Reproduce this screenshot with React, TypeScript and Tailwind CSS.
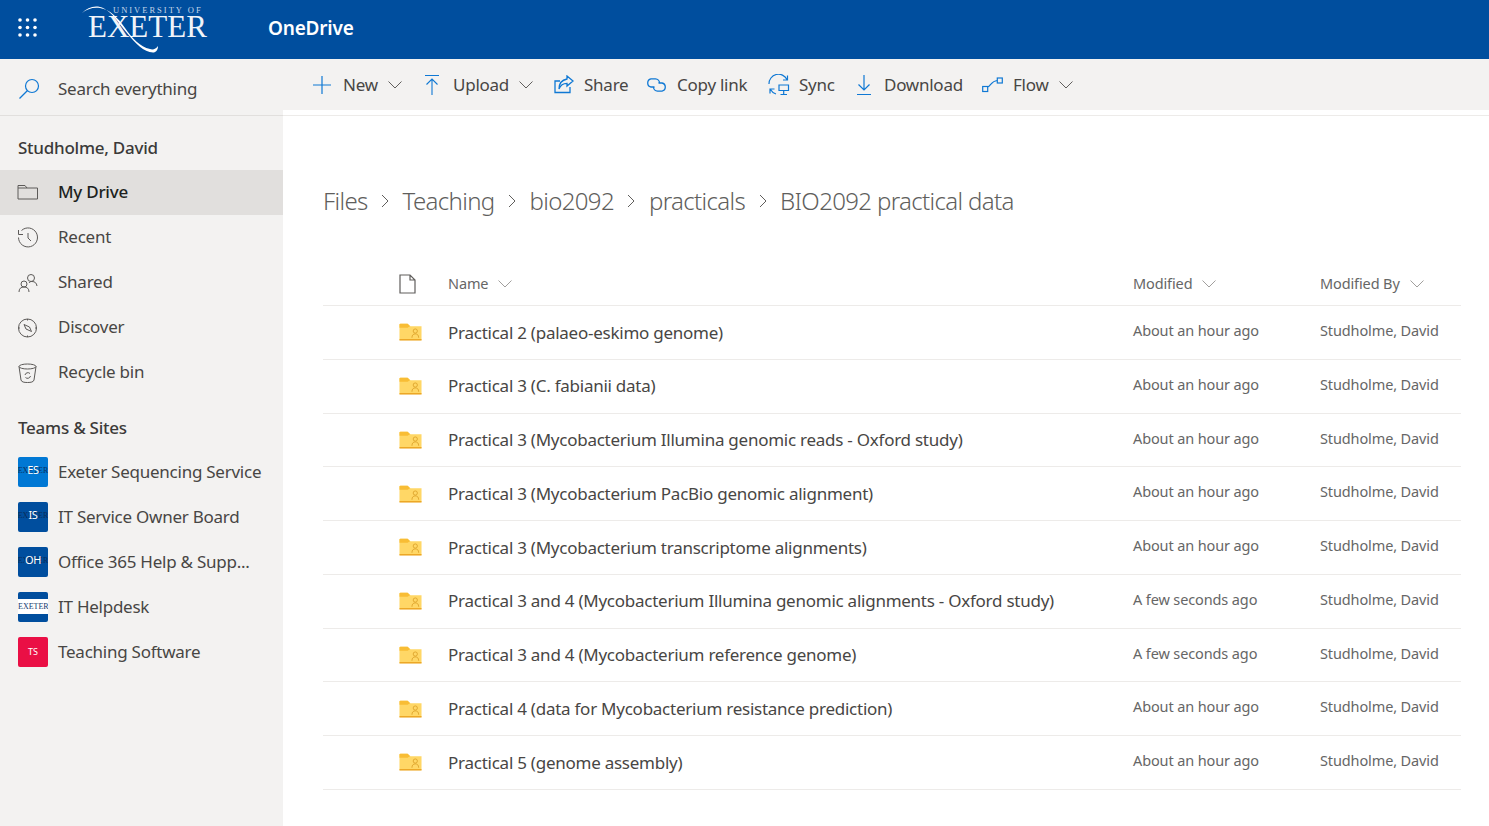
import { ReactNode } from "react";

const font = { fontFamily: '"Noto Sans", sans-serif' };
const serif = { fontFamily: '"Liberation Serif", serif' };

function Chevron({ className = "" }: { className?: string }) {
  return (
    <svg viewBox="0 0 14 8" className={`w-[14px] h-[8px] ${className}`} fill="none" stroke="currentColor" strokeWidth="1">
      <path d="M0.5 0.5 L7 7 L13.5 0.5" />
    </svg>
  );
}

function Waffle() {
  const dots = [3, 10.5, 18];
  return (
    <svg viewBox="0 0 21 21" className="w-[21px] h-[21px]" fill="white">
      {dots.map((y) => dots.map((x) => <circle key={`${x}-${y}`} cx={x} cy={y} r="1.8" />))}
    </svg>
  );
}

function ExeterLogo() {
  return (
    <div className="relative w-[130px] h-[59px] text-white" style={serif}>
      <div className="absolute left-[33px] top-[5px] text-[8.5px] leading-[10px] tracking-[2px] text-[#c4d5e8] whitespace-nowrap">
        UNIVERSITY OF
      </div>
      <div className="absolute left-[8px] top-[12px] text-[31px] leading-[30px] text-[#f0f4f9] whitespace-nowrap">
        EXETER
      </div>
      <svg viewBox="0 0 130 59" className="absolute inset-0 w-[130px] h-[59px]" fill="white">
        <path d="M2 13 C8 7 16 4.500 24 8.500 C33 13 39 24 47 33 C55 43 64 52.500 73 52.500 C76 52.500 78 50 78 46 C76 49 73 50 70 49 C60 47 52 38 45 28 C38 18 30 9.500 20 8 C13 7 7 9 2 13 Z" />
      </svg>
    </div>
  );
}

const ic = "text-[#0f78d4]";

const toolbarIcons: Record<string, ReactNode> = {
  plus: (
    <svg viewBox="0 0 20 20" className={`w-[20px] h-[20px] ${ic}`} fill="none" stroke="currentColor" strokeWidth="1.200">
      <path d="M10 1 V19 M1 10 H19" />
    </svg>
  ),
  upload: (
    <svg viewBox="0 0 16 22" className={`w-[16px] h-[22px] ${ic}`} fill="none" stroke="currentColor" strokeWidth="1.100">
      <path d="M1 1.500 H15 M8 21 V5 M2.500 10.500 L8 5 L13.500 10.500" />
    </svg>
  ),
  share: (
    <svg viewBox="0 0 20 19" className={`w-[20px] h-[19px] ml-[1px] ${ic}`} fill="none" stroke="currentColor" strokeWidth="1.300">
      <path d="M16 12 V17.500 H1 V6 H6" />
      <path d="M13 1 L19 6 L13 11 V8.300 C9 8.300 6.500 10 5 14 C5 8.500 8 5 13 4 Z" />
    </svg>
  ),
  link: (
    <svg viewBox="0 0 21 14" className={`w-[21px] h-[14px] ${ic}`} fill="none" stroke="currentColor" strokeWidth="1.300">
      <path d="M8.500 9 H5 A4.200 4.200 0 0 1 5 0.800 H9.500 A4.200 4.200 0 0 1 13.500 5" />
      <path d="M12.500 5 H16 A4.200 4.200 0 0 1 16 13.200 H11.500 A4.200 4.200 0 0 1 7.500 9" />
    </svg>
  ),
  sync: (
    <svg viewBox="0 0 22 22" className={`w-[22px] h-[22px] ml-[1px] ${ic}`} fill="none" stroke="currentColor" strokeWidth="1.200">
      <path d="M1 10 A9.500 9.500 0 0 1 19 5.500 M19.500 1.500 V6 H15" />
      <path d="M2 19.500 V15 H6.500 M2.500 15.500 A9.500 9.500 0 0 0 8 20" />
      <path d="M11 11 H20.500 V16.500 H11 Z M15.700 16.500 V20 M12.500 20.500 H19" />
    </svg>
  ),
  download: (
    <svg viewBox="0 0 16 22" className={`w-[16px] h-[22px] ${ic}`} fill="none" stroke="currentColor" strokeWidth="1.200">
      <path d="M1 20.500 H15 M8 1 V16 M2.500 10.500 L8 16 L13.500 10.500" />
    </svg>
  ),
  flow: (
    <svg viewBox="0 0 21 16" className={`w-[21px] h-[16px] ml-[1px] ${ic}`} fill="none" stroke="currentColor" strokeWidth="1.200">
      <rect x="0.700" y="9.500" width="5" height="5" />
      <rect x="15.300" y="1" width="5" height="5" />
      <path d="M5.500 10 C9 9 9 4 15.300 3.500" />
    </svg>
  ),
};

const toolbarItems = [
  { icon: "plus", label: "New", chevron: true, box: "w-[112px]", iconBox: "w-[31px]" },
  { icon: "upload", label: "Upload", chevron: true, box: "w-[129px]", iconBox: "w-[29px]" },
  { icon: "share", label: "Share", chevron: false, box: "w-[93px]", iconBox: "w-[31px]" },
  { icon: "link", label: "Copy link", chevron: false, box: "w-[121px]", iconBox: "w-[31px]" },
  { icon: "sync", label: "Sync", chevron: false, box: "w-[89px]", iconBox: "w-[32px]" },
  { icon: "download", label: "Download", chevron: false, box: "w-[125px]", iconBox: "w-[28px]" },
  { icon: "flow", label: "Flow", chevron: true, box: "w-[100px]", iconBox: "w-[32px]" },
];

function NavIcon({ name }: { name: string }) {
  const common = "w-[22px] h-[22px] text-[#5c5a58]";
  if (name === "folder")
    return (
      <svg viewBox="0 0 22 22" className={common} fill="none" stroke="currentColor" strokeWidth="1">
        <path d="M1 3.500 H8 L10 6 H20.500 V17 H1 Z M1 6 H10" />
      </svg>
    );
  if (name === "recent")
    return (
      <svg viewBox="0 0 22 22" className={common} fill="none" stroke="currentColor" strokeWidth="1">
        <path d="M4.500 3.500 A9.500 9.500 0 1 1 1.500 10.500 M1.500 3 V7.500 H6 M11 6 V11 L14 14" />
      </svg>
    );
  if (name === "shared")
    return (
      <svg viewBox="0 0 22 22" className={common} fill="none" stroke="currentColor" strokeWidth="1">
        <circle cx="14" cy="6" r="3.500" />
        <circle cx="7" cy="12" r="3" />
        <path d="M2 20 C2 16.500 4 15 7 15 C10 15 12 16.500 12 20 M12 11 C13 9.500 14 9.500 15 9.500 C18 9.500 19.500 11 20 14" />
      </svg>
    );
  if (name === "discover")
    return (
      <svg viewBox="0 0 22 22" className={common} fill="none" stroke="currentColor" strokeWidth="1">
        <circle cx="10.500" cy="11" r="9" />
        <path d="M7 7.500 L12.500 10 L14.500 14.500 L9 12 Z M10.500 2 V3.500 M10.500 18.500 V20 M1.500 11 H3 M18 11 H19.500" />
      </svg>
    );
  return (
    <svg viewBox="0 0 22 22" className={common} fill="none" stroke="currentColor" strokeWidth="1">
      <ellipse cx="10.500" cy="4.500" rx="8.500" ry="2.500" />
      <path d="M2 4.500 L4 18 C4.500 20 7 20.500 10.500 20.500 C14 20.500 16.500 20 17 18 L19 4.500" />
      <path d="M8 13 A3 3 0 0 1 13 11.500 M13.500 14 A3 3 0 0 1 8.500 15.500" />
    </svg>
  );
}

const navItems = [
  { icon: "folder", label: "My Drive", active: true },
  { icon: "recent", label: "Recent", active: false },
  { icon: "shared", label: "Shared", active: false },
  { icon: "discover", label: "Discover", active: false },
  { icon: "recycle", label: "Recycle bin", active: false },
];

function SiteTile({ initials, bg }: { initials: string; bg: string }) {
  return (
    <div className={`relative w-[30px] h-[30px] rounded-[2px] overflow-hidden shrink-0 flex items-center justify-center pb-[2px] ${bg}`}>
      <span className="absolute left-[-3px] right-[-3px] top-[9px] text-center text-[8px] leading-[9px] text-[#0c2a52] opacity-90 whitespace-nowrap" style={serif}>
        EXETER
      </span>
      <span className="relative text-[11px] tracking-[-0.3px] text-white">{initials}</span>
    </div>
  );
}

function HelpdeskTile() {
  return (
    <div className="relative w-[30px] h-[30px] rounded-[2px] overflow-hidden shrink-0 bg-[#004e9e] flex items-center">
      <div className="w-full h-[15px] bg-white text-center text-[8px] leading-[15px] text-[#123a6e] whitespace-nowrap" style={serif}>
        EXETER
      </div>
    </div>
  );
}

const sites = [
  { label: "Exeter Sequencing Service", tile: <SiteTile initials="ES" bg="bg-[#0078d4]" /> },
  { label: "IT Service Owner Board", tile: <SiteTile initials="IS" bg="bg-[#004e9e]" /> },
  { label: "Office 365 Help & Supp...", tile: <SiteTile initials="OH" bg="bg-[#004e9e]" /> },
  { label: "IT Helpdesk", tile: <HelpdeskTile /> },
  {
    label: "Teaching Software",
    tile: (
      <div className="w-[30px] h-[30px] rounded-[2px] shrink-0 bg-[#ea0f45] flex items-center justify-center text-[9px] text-white">TS</div>
    ),
  },
];

function SharedFolder() {
  return (
    <svg viewBox="0 0 24 18" className="w-[23px] h-[18px]">
      <path d="M0.500 1.500 Q0.500 0.500 1.500 0.500 H9 L12 3 H23.500 V17.500 H0.500 Z" fill="#ffd766" />
      <path d="M0.500 1.500 Q0.500 0.500 1.500 0.500 H9 L11.500 3 L9 4.500 H0.500 Z" fill="#f8bd35" />
      <rect x="0.500" y="16.500" width="23" height="1.300" fill="#e89c18" />
      <circle cx="17" cy="8" r="2.200" fill="none" stroke="#dca22a" strokeWidth="0.900" />
      <path d="M13.500 15 C13.500 12 15 11 17 11 C19 11 20.500 12 20.500 15" fill="none" stroke="#dca22a" strokeWidth="0.900" />
    </svg>
  );
}

const rows = [
  { name: "Practical 2 (palaeo-eskimo genome)", modified: "About an hour ago" },
  { name: "Practical 3 (C. fabianii data)", modified: "About an hour ago" },
  { name: "Practical 3 (Mycobacterium Illumina genomic reads - Oxford study)", modified: "About an hour ago" },
  { name: "Practical 3 (Mycobacterium PacBio genomic alignment)", modified: "About an hour ago" },
  { name: "Practical 3 (Mycobacterium transcriptome alignments)", modified: "About an hour ago" },
  { name: "Practical 3 and 4 (Mycobacterium Illumina genomic alignments - Oxford study)", modified: "A few seconds ago" },
  { name: "Practical 3 and 4 (Mycobacterium reference genome)", modified: "A few seconds ago" },
  { name: "Practical 4 (data for Mycobacterium resistance prediction)", modified: "About an hour ago" },
  { name: "Practical 5 (genome assembly)", modified: "About an hour ago" },
];

const crumbs = ["Files", "Teaching", "bio2092", "practicals", "BIO2092 practical data"];

export default function App() {
  return (
    <div className="w-[1489px] h-[826px] overflow-hidden flex flex-col bg-white" style={font}>
      <header className="h-[59px] shrink-0 bg-[#004e9e] flex items-center">
        <div className="w-[55px] flex justify-center mb-[4px]">
          <Waffle />
        </div>
        <div className="ml-[25px]">
          <ExeterLogo />
        </div>
        <div className="ml-[58px] mb-[2px] text-[19px] font-semibold text-white tracking-[-0.2px]">OneDrive</div>
      </header>

      <div className="flex flex-1 min-h-0">
        <aside className="w-[283px] shrink-0 bg-[#f3f2f1] flex flex-col">
          <div className="h-[57px] shrink-0 border-b border-[#e1dfdd] flex items-center pl-[18px] pt-[3px]">
            <svg viewBox="0 0 22 22" className="w-[22px] h-[22px] text-[#0f78d4]" fill="none" stroke="currentColor" strokeWidth="1.200">
              <circle cx="14" cy="8" r="6.500" />
              <path d="M9.500 12.500 L1.500 20.500" />
            </svg>
            <span className="ml-[18px] text-[17px] tracking-[-0.25px] text-[#484644]">Search everything</span>
          </div>

          <div className="h-[54px] shrink-0 flex items-end pb-[10px] pl-[18px] text-[17px] font-medium tracking-[-0.25px] text-[#3b3a39]">
            Studholme, David
          </div>

          {navItems.map((item) => (
            <div key={item.label} className={`h-[45px] shrink-0 flex items-center pl-[17px] ${item.active ? "bg-[#e1dfdd]" : ""}`}>
              <NavIcon name={item.icon} />
              <span className={`ml-[19px] mb-[1px] text-[17px] tracking-[-0.25px] ${item.active ? "font-medium text-[#201f1e]" : "text-[#484644]"}`}>
                {item.label}
              </span>
            </div>
          ))}

          <div className="h-[54px] shrink-0 flex items-end pb-[9px] pl-[18px] text-[17px] font-medium tracking-[-0.25px] text-[#3b3a39]">
            Teams &amp; Sites
          </div>

          {sites.map((site) => (
            <div key={site.label} className="h-[45px] shrink-0 flex items-center pl-[18px]">
              {site.tile}
              <span className="ml-[10px] text-[17px] tracking-[-0.25px] text-[#484644] whitespace-nowrap">{site.label}</span>
            </div>
          ))}
        </aside>

        <main className="flex-1 min-w-0 flex flex-col">
          <div className="h-[51px] shrink-0 bg-[#f3f2f1] flex items-center pl-[29px] text-[17px] tracking-[-0.25px] text-[#484644]">
            {toolbarItems.map((item) => (
              <div key={item.label} className={`flex items-center shrink-0 ${item.box}`}>
                <div className={`flex items-center shrink-0 ${item.iconBox}`}>{toolbarIcons[item.icon]}</div>
                <span className="whitespace-nowrap">{item.label}</span>
                {item.chevron && <Chevron className="ml-[10px] text-[#605e5c]" />}
              </div>
            ))}
          </div>

          <div className="mt-[5px] border-t border-[#edebe9]" />

          <nav className="mt-[67px] ml-[40px] h-[36px] flex items-center text-[24px] font-light tracking-[-0.65px] text-[#605e5c] whitespace-nowrap">
            {crumbs.map((crumb, i) => (
              <div key={crumb} className="flex items-center">
                {i > 0 && (
                  <svg viewBox="0 0 8 14" className="w-[8px] h-[14px] mx-[13.5px] text-[#605e5c]" fill="none" stroke="currentColor" strokeWidth="1">
                    <path d="M1 1 L7 7 L1 13" />
                  </svg>
                )}
                <span>{crumb}</span>
              </div>
            ))}
          </nav>

          <div className="mt-[45px] ml-[40px] w-[1138px]">
            <div className="h-[42px] pb-[2px] flex items-center border-b border-[#edebe9] text-[14.5px] tracking-[-0.12px] text-[#666666]">
              <div className="w-[125px] pl-[76px] shrink-0">
                <svg viewBox="0 0 17 20" className="w-[17px] h-[20px] block" fill="none" stroke="#605e5c" strokeWidth="1.200">
                  <path d="M1 1 H11 L16 6 V19 H1 Z M11 1 V6 H16" />
                </svg>
              </div>
              <div className="w-[685px] shrink-0 flex items-center">
                Name
                <Chevron className="ml-[10px] text-[#a19f9d]" />
              </div>
              <div className="w-[187px] shrink-0 flex items-center">
                Modified
                <Chevron className="ml-[10px] text-[#a19f9d]" />
              </div>
              <div className="flex items-center">
                Modified By
                <Chevron className="ml-[10px] text-[#a19f9d]" />
              </div>
            </div>
            {rows.map((row) => (
              <div key={row.name} className="h-[53.75px] flex items-center border-b border-[#edebe9] text-[#666666]">
                <div className="w-[125px] pl-[76px] shrink-0">
                  <SharedFolder />
                </div>
                <div className="w-[685px] shrink-0 text-[17px] tracking-[-0.25px] text-[#484644] whitespace-nowrap">{row.name}</div>
                <div className="w-[187px] shrink-0 pb-[3px] text-[14.5px] tracking-[-0.12px] whitespace-nowrap">{row.modified}</div>
                <div className="pb-[3px] text-[14.5px] tracking-[-0.12px] whitespace-nowrap">Studholme, David</div>
              </div>
            ))}
          </div>
        </main>
      </div>
    </div>
  );
}
